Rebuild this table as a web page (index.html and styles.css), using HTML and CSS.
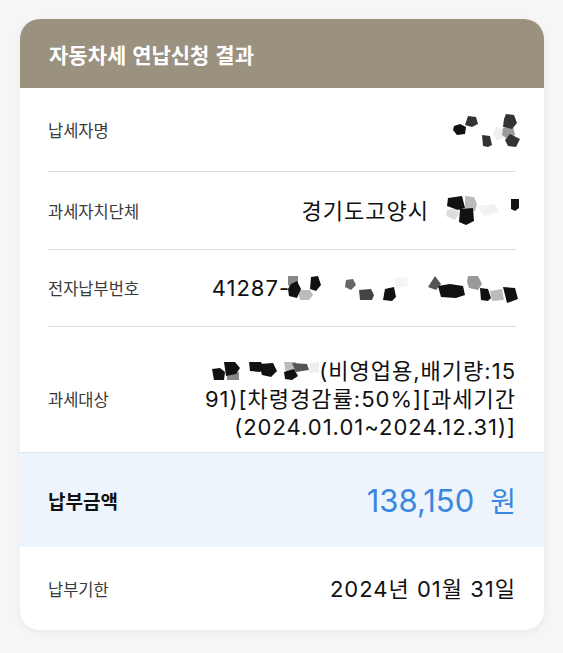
FILE: index.html
```html
<!DOCTYPE html>
<html lang="ko">

<head>
    <meta charset="UTF-8">
    <meta name="viewport" content="width=device-width, initial-scale=1.0">
    <title>자동차세 연납신청 결과</title>
    <link rel="stylesheet" href="styles.css">
</head>

<body>
    <div class="card">
        <div class="card-header">자동차세 연납신청 결과</div>

        <div class="row row-name">
            <span class="label">납세자명</span>
            <span class="value">
                <!-- masked name -->
                <svg class="mask" width="70" height="38" viewBox="0 0 70 38">
                    <polygon fill="#eeeeee" points="46,16 54,18 55,27 47,29 43,24"/>
                    <polygon fill="#999999" points="53,17 63,16 65,24 58,28 52,24"/>
                    <polygon fill="#111111" points="4,15 10,13 16,16 15,23 7,24 3,19"/>
                    <polygon fill="#333333" points="18,5 26,6 28,13 22,16 15,14"/>
                    <polygon fill="#333333" points="32,24 40,25 42,34 38,36 33,35"/>
                    <polygon fill="#333333" points="56,3 64,4 67,12 62,18 53,16 54,8"/>
                    <polygon fill="#333333" points="60,23 70,28 66,36 58,35 55,29"/>
                </svg>
            </span>
        </div>

        <div class="row">
            <span class="label">과세자치단체</span>
            <span class="value">
                경기도고양시
                <svg class="mask gap" width="76" height="33" viewBox="0 0 76 33">
                    <polygon fill="#f2f2f2" points="33,12 50,10 55,18 40,22"/>
                    <polygon fill="#dddddd" points="3,16 12,14 15,20 11,26 2,22"/>
                    <polygon fill="#bbbbbb" points="21,2 30,3 33,10 31,17 21,16"/>
                    <polygon fill="#111111" points="4,4 18,2 21,14 14,16 3,12"/>
                    <polygon fill="#111111" points="16,15 29,14 30,27 22,31 15,28"/>
                    <polygon fill="#111111" points="67,5 75,5 75,14 71,17 67,15"/>
                </svg>
            </span>
        </div>

        <div class="row">
            <span class="label">전자납부번호</span>
            <span class="value">
                41287-
                <svg class="mask tight" width="232" height="31" viewBox="0 0 232 31">
                    <polygon fill="#888888" points="0,3 10,3 10,13 3,15 0,12"/>
                    <polygon fill="#bbbbbb" points="10,17 22,17 25,22 21,27 12,27"/>
                    <polygon fill="#111111" points="3,11 9,8 13,16 9,25 1,23 0,16"/>
                    <polygon fill="#111111" points="23,4 30,3 33,12 28,18 22,16"/>
                    <polygon fill="#666666" points="58,7 65,6 68,12 63,17 57,14"/>
                    <polygon fill="#444444" points="71,17 83,16 86,22 84,27 72,27"/>
                    <polygon fill="#f5f5f5" points="107,4 119,4 120,14 108,15"/>
                    <polygon fill="#111111" points="97,16 106,14 108,24 104,28 95,27"/>
                    <polygon fill="#555555" points="147,3 153,11 148,17 140,14"/>
                    <polygon fill="#111111" points="150,13 162,11 175,13 177,22 168,25 153,24"/>
                    <polygon fill="#999999" points="180,3 190,3 194,11 190,17 181,15 179,9"/>
                    <polygon fill="#bbbbbb" points="202,18 214,16 216,27 204,28"/>
                    <polygon fill="#111111" points="192,15 200,16 203,25 200,28 193,27"/>
                    <polygon fill="#111111" points="215,14 227,15 230,26 219,30"/>
                </svg>
            </span>
        </div>

        <div class="row row-target">
            <span class="label">과세대상</span>
            <span class="value multi">
                <svg class="mask inline" width="109" height="22" viewBox="0 0 109 22">
                    <polygon fill="#eeeeee" points="99,3 109,2 109,12 100,13"/>
                    <polygon fill="#bbbbbb" points="74,2 86,2 87,12 76,13"/>
                    <polygon fill="#888888" points="17,13 29,12 29,20 17,20"/>
                    <polygon fill="#111111" points="2,9 10,8 15,12 14,20 4,20"/>
                    <polygon fill="#111111" points="14,2 25,2 30,8 26,14 16,16"/>
                    <polygon fill="#111111" points="39,2 51,2 54,8 50,12 40,11"/>
                    <polygon fill="#111111" points="49,4 63,3 67,11 61,17 52,15"/>
                    <polygon fill="#111111" points="74,12 84,9 88,16 82,20 75,19"/>
                    <polygon fill="#555555" points="82,3 97,4 99,10 86,12"/>
                </svg>(비영업용,배기량:15<br>91)[차령경감률:50%][과세기간<br>(2024.01.01~2024.12.31)]
            </span>
        </div>

        <div class="amount-row">
            <span class="amount-label">납부금액</span>
            <span class="amount">138,150<span class="won">원</span></span>
        </div>

        <div class="row row-due">
            <span class="label">납부기한</span>
            <span class="value">2024년 01월 31일</span>
        </div>
    </div>
</body>

</html>
```

FILE: styles.css
```css
body {
    margin: 0;
    padding: 19px 20px;
    background-color: #f6f6f6;
    font-family: 'Inter', 'Noto Sans CJK KR', sans-serif;
    color: #111111;
}

.card {
    width: 524px;
    background-color: #ffffff;
    border-radius: 20px;
    overflow: hidden;
    box-shadow: 0 2px 8px rgba(0, 0, 0, 0.06);
}

.card-header {
    height: 69px;
    padding: 0 29px;
    display: flex;
    align-items: center;
    background-color: #9b917f;
    color: #ffffff;
    font-family: 'Noto Sans CJK KR', sans-serif;
    font-weight: 700;
    font-size: 21px;
}

.row {
    margin: 0 28px;
    padding: 22px 0;
    min-height: 32px;
    display: flex;
    align-items: center;
    justify-content: space-between;
    border-bottom: 1px solid #dddddd;
}

.row-name {
    min-height: 39px;
}

.row-target {
    padding: 30px 0 11px;
    border-bottom: none;
}

.label {
    flex: none;
    font-family: 'Noto Sans CJK KR', sans-serif;
    font-size: 16.5px;
    color: #3a3a3a;
}

.value {
    flex: 1;
    display: flex;
    align-items: center;
    justify-content: flex-end;
    font-size: 22px;
    line-height: 28px;
    letter-spacing: 1px;
}

.value.multi {
    display: block;
    text-align: right;
    padding-left: 20px;
}

.mask {
    flex: none;
    display: block;
    margin-right: -4px;
}

.mask.gap {
    margin-left: 15px;
}

.mask.tight {
    margin-left: -2px;
}

.mask.inline {
    display: inline-block;
    vertical-align: -3px;
    margin-right: 0;
}

/* highlighted amount */
.amount-row {
    padding: 0 28px;
    height: 94px;
    display: flex;
    align-items: center;
    justify-content: space-between;
    background-color: #edf4fb;
    border-top: 1px solid #e2e5e8;
}

.amount-label {
    font-family: 'Noto Sans CJK KR', sans-serif;
    font-weight: 700;
    font-size: 19px;
}

.amount {
    font-size: 31px;
    color: #3b87e0;
}

.won {
    font-size: 28px;
    margin-left: 16px;
}

.row-due {
    border-bottom: none;
    min-height: 39px;
}
```
